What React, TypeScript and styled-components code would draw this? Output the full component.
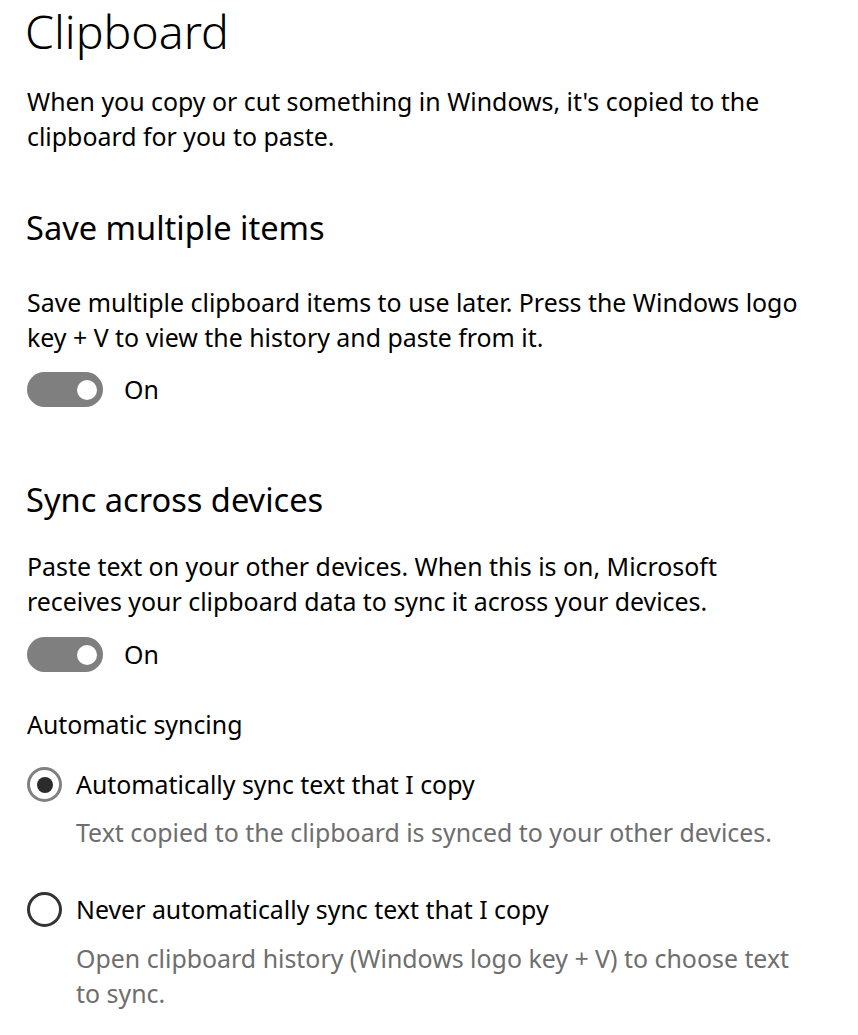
import * as React from 'react';
import styled, { createGlobalStyle } from 'styled-components';

const GlobalStyle = createGlobalStyle`
  html, body {
    margin: 0;
    padding: 0;
    background: #ffffff;
  }
  body {
    font-family: "Noto Sans", "Open Sans", "Liberation Sans", sans-serif;
    color: #000000;
  }
`;

const Page = styled.main`
  padding: 0 0 0 27px;
  width: 780px;
`;

const Title = styled.h1`
  margin: 0;
  padding-top: 1px;
  margin-left: -2px;
  font-size: 46.5px;
  font-weight: 300;
  line-height: 60px;
`;

const Paragraph = styled.p<{ $muted?: boolean; $top?: number }>`
  margin: ${p => p.$top ?? 0}px 0 0 0;
  font-size: 24.9px;
  line-height: 35px;
  color: ${p => (p.$muted ? '#6e6e6e' : '#000000')};
`;

const SectionTitle = styled.h2<{ $top: number }>`
  margin: ${p => p.$top}px 0 0 -1px;
  font-size: 32.6px;
  font-weight: 400;
  line-height: 40px;
`;

const Label = styled.div<{ $top: number }>`
  margin-top: ${p => p.$top}px;
  font-size: 24.9px;
  line-height: 35px;
`;

const ToggleRow = styled.div<{ $top: number }>`
  display: flex;
  align-items: center;
  gap: 21px;
  margin-top: ${p => p.$top}px;
  height: 35px;
`;

const ToggleTrack = styled.div<{ $on: boolean }>`
  width: 76px;
  height: 35px;
  border-radius: 18px;
  background: #7f7f7f;
  display: flex;
  align-items: center;
  justify-content: ${p => (p.$on ? 'flex-end' : 'flex-start')};
  padding: 0 6px;
  box-sizing: border-box;
`;

const Knob = styled.span`
  width: 20px;
  height: 20px;
  border-radius: 50%;
  background: #ffffff;
`;

const ToggleText = styled.span`
  font-size: 24.9px;
  line-height: 35px;
`;

const RadioBlock = styled.div<{ $top: number }>`
  margin-top: ${p => p.$top}px;
  display: grid;
  grid-template-columns: 35px 1fr;
  column-gap: 14px;
  align-items: center;
`;

const RadioCircle = styled.span<{ $checked: boolean }>`
  width: 35px;
  height: 35px;
  border-radius: 50%;
  box-sizing: border-box;
  border: 3px solid ${p => (p.$checked ? '#808080' : '#333333')};
  display: flex;
  align-items: center;
  justify-content: center;
  &::after {
    content: '';
    display: ${p => (p.$checked ? 'block' : 'none')};
    width: 16px;
    height: 16px;
    border-radius: 50%;
    background: #2b2b2b;
  }
`;

const RadioLabel = styled.span`
  font-size: 24.9px;
  line-height: 35px;
`;

const RadioHelp = styled(Paragraph)`
  grid-column: 2;
`;

const Toggle = ({ on, top }: { on: boolean; top: number }) => (
  <ToggleRow $top={top}>
    <ToggleTrack $on={on}>
      <Knob />
    </ToggleTrack>
    <ToggleText>{on ? 'On' : 'Off'}</ToggleText>
  </ToggleRow>
);

const Radio = (props: { checked: boolean; label: string; help: string; top: number; helpTop: number }) => (
  <RadioBlock $top={props.top}>
    <RadioCircle $checked={props.checked} />
    <RadioLabel>{props.label}</RadioLabel>
    <RadioHelp $muted $top={props.helpTop}>{props.help}</RadioHelp>
  </RadioBlock>
);

export default function App() {
  return (
    <>
      <GlobalStyle />
      <Page>
        <Title>Clipboard</Title>
        <Paragraph $top={23}>
          When you copy or cut something in Windows, it's copied to the clipboard for you to paste.
        </Paragraph>

        <SectionTitle $top={54}>Save multiple items</SectionTitle>
        <Paragraph $top={37}>
          Save multiple clipboard items to use later. Press the Windows logo key + V to view the history and paste from it.
        </Paragraph>
        <Toggle on top={17} />

        <SectionTitle $top={73}>Sync across devices</SectionTitle>
        <Paragraph $top={29}>
          Paste text on your other devices. When this is on, Microsoft receives your clipboard data to sync it across your devices.
        </Paragraph>
        <Toggle on top={18} />

        <Label $top={35}>Automatic syncing</Label>

        <Radio
          top={25}
          helpTop={13}
          checked
          label="Automatically sync text that I copy"
          help="Text copied to the clipboard is synced to your other devices."
        />
        <Radio
          top={42}
          helpTop={14}
          checked={false}
          label="Never automatically sync text that I copy"
          help="Open clipboard history (Windows logo key + V) to choose text to sync."
        />
      </Page>
    </>
  );
}
